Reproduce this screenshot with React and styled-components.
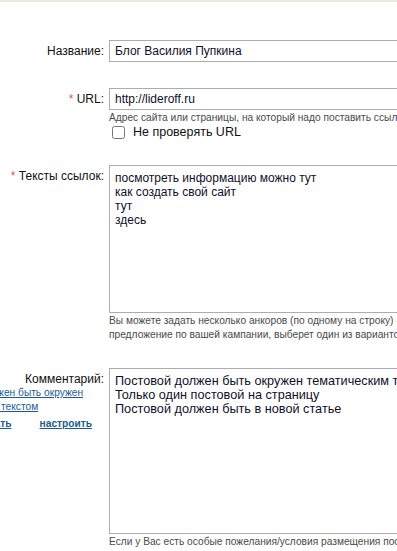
import React from 'react'
import styled, { createGlobalStyle } from 'styled-components'

const GlobalStyle = createGlobalStyle`
    html, body {
        margin: 0;
        padding: 0;
        background: #fff;
        overflow: hidden;
    }
    body {
        font-family: "Liberation Sans", Arial, sans-serif;
        color: #222;
    }
`

function App() {
    return (
        <>
            <GlobalStyle />
            <TopLine />
            <Form>
                <Row>
                    <Label>Название:</Label>
                    <Field>
                        <TextInput defaultValue="Блог Василия Пупкина" />
                    </Field>
                </Row>

                <Row>
                    <Label><Star>*</Star> URL:</Label>
                    <Field>
                        <TextInput defaultValue="http://lideroff.ru" />
                        <Hint>Адрес сайта или страницы, на который надо поставить ссылку</Hint>
                        <CheckRow>
                            <Check type="checkbox" />
                            <span>Не проверять URL</span>
                        </CheckRow>
                    </Field>
                </Row>

                <Row>
                    <Label><Star>*</Star> Тексты ссылок:</Label>
                    <Field>
                        <Area
                            height={148}
                            defaultValue={'посмотреть информацию можно тут\nкак создать свой сайт\nтут\nздесь'}
                        />
                        <Hint>
                            Вы можете задать несколько анкоров (по одному на строку) - система, принимая
                            <br />
                            предложение по вашей кампании, выберет один из вариантов
                        </Hint>
                    </Field>
                </Row>

                <Row>
                    <LabelCell>
                        <Label>Комментарий:</Label>
                        <Templates>
                            <TemplateLink href="#">Постовой должен быть окружен тематическим текстом</TemplateLink>
                            <Actions>
                                <ActionLink href="#">выбрать все</ActionLink>
                                <ActionLink href="#">настроить</ActionLink>
                            </Actions>
                        </Templates>
                    </LabelCell>
                    <Field>
                        <Area
                            big
                            height={166}
                            defaultValue={'Постовой должен быть окружен тематическим текстом\nТолько один постовой на страницу\nПостовой должен быть в новой статье'}
                        />
                        <Hint>Если у Вас есть особые пожелания/условия размещения постового</Hint>
                    </Field>
                </Row>
            </Form>
        </>
    )
}

const TopLine = styled.div`
    height: 2px;
    background: #ebebdc;
`

// the form is scrolled sideways: its label column starts left of the view
const Form = styled.div`
    margin-left: -68px;
    padding-top: 38px;
    display: flex;
    flex-direction: column;
    gap: 26px;
`

const Row = styled.div`
    display: grid;
    grid-template-columns: 172px 480px;
    column-gap: 5px;
    align-items: start;
`

const LabelCell = styled.div`
    display: flex;
    flex-direction: column;
`

const Label = styled.div`
    text-align: right;
    font-size: 12px;
    line-height: 22px;
    color: #111;
    white-space: nowrap;
`

const Star = styled.span`
    color: #e8553e;
`

const Field = styled.div`
    display: flex;
    flex-direction: column;
`

const TextInput = styled.input`
    box-sizing: border-box;
    width: 100%;
    height: 22px;
    border: 1px solid #abadb3;
    padding: 0 5px;
    font-family: "Liberation Sans", Arial, sans-serif;
    font-size: 12px;
    color: #10102a;
    outline: none;
`

const Hint = styled.div`
    font-size: 10.2px;
    line-height: 14px;
    color: #4a4a4a;
    white-space: nowrap;
    margin-top: 1px;
`

const CheckRow = styled.label`
    display: flex;
    align-items: center;
    gap: 8px;
    font-size: 12.5px;
    color: #111;
    padding-left: 3px;
`

const Check = styled.input`
    margin: 0;
    width: 13px;
    height: 13px;
`

const Area = styled.textarea`
    box-sizing: border-box;
    width: 100%;
    height: ${props => props.height}px;
    border: 1px solid #abadb3;
    padding: 5px 5px;
    resize: none;
    font-family: "Liberation Sans", Arial, sans-serif;
    font-size: ${props => props.big ? '12.7px' : '12px'};
    line-height: 14px;
    color: #10102a;
    outline: none;
`

const Templates = styled.div`
    width: 160px;
    font-size: 10.2px;
    line-height: 14px;
    margin-top: -4px;
`

const TemplateLink = styled.a`
    color: #1d5a94;
    text-decoration: underline;
`

const Actions = styled.div`
    display: flex;
    gap: 28px;
    margin-top: 3px;
    padding-left: 35px;
`

const ActionLink = styled.a`
    color: #1d5a94;
    font-weight: bold;
    text-decoration: underline;
`

export default App
